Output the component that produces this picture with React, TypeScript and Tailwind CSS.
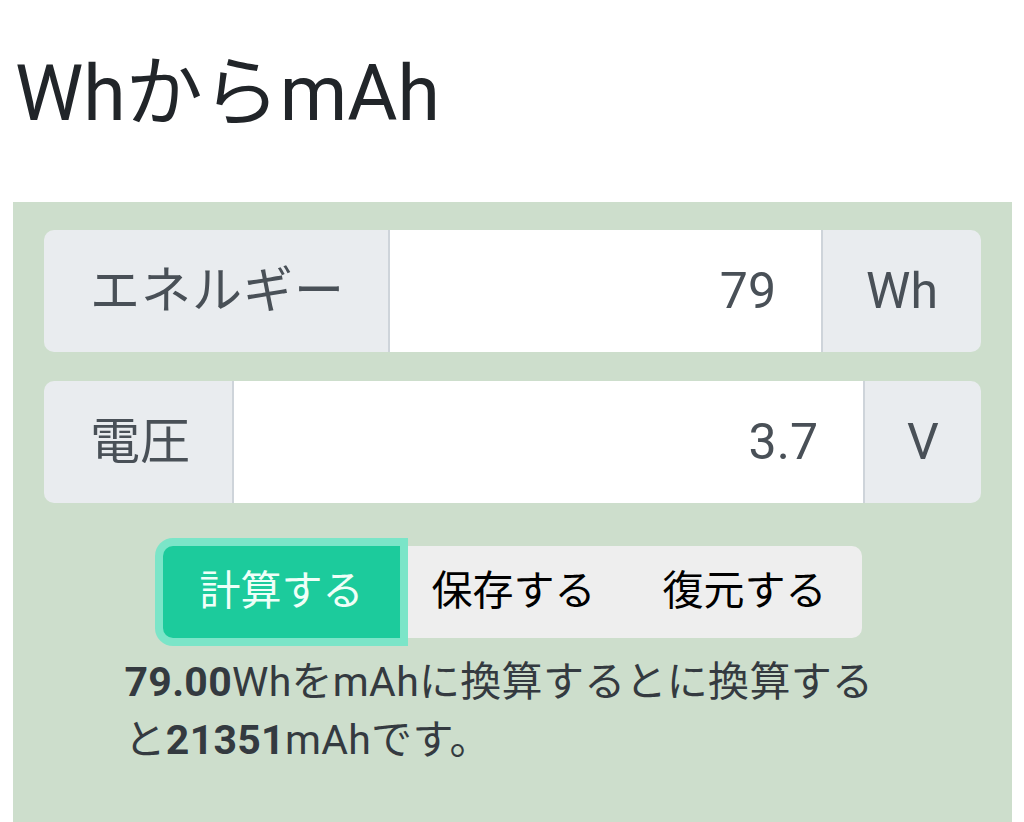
export default function App() {
  const font = { fontFamily: 'Roboto, "Noto Sans CJK JP", sans-serif' };
  return (
    <div className="min-h-screen bg-white" style={font}>
      <h1 className="pl-[15px] pt-[44px] h-[202px] text-[77px] leading-[100px] text-[#212529] font-normal">
        WhからmAh
      </h1>
      <div className="mx-[13px] w-[999px] bg-[#cddecc] px-[31px] pt-[28px] pb-[80px]">
        <div className="flex h-[122px] rounded-[10px] overflow-hidden text-[50px] text-[#495057]">
          <div className="w-[346px] flex items-center pl-[46px] bg-[#e9ecef] border-r-2 border-[#ced4da] tracking-[1px]">エネルギー</div>
          <div className="flex-1 flex items-center justify-end pr-[45px] bg-white">79</div>
          <div className="w-[160px] flex items-center justify-center bg-[#e9ecef] border-l-2 border-[#ced4da]">Wh</div>
        </div>
        <div className="flex h-[122px] mt-[29px] rounded-[10px] overflow-hidden text-[50px] text-[#495057]">
          <div className="w-[190px] flex items-center pl-[46px] bg-[#e9ecef] border-r-2 border-[#ced4da]">電圧</div>
          <div className="flex-1 flex items-center justify-end pr-[45px] bg-white">3.7</div>
          <div className="w-[118px] flex items-center justify-center bg-[#e9ecef] border-l-2 border-[#ced4da]">V</div>
        </div>
        <div className="flex justify-center mt-[43px]">
          <div className="flex h-[92px] rounded-[10px] bg-[#eeeeee] text-[41px]">
            <button className="relative z-10 w-[237px] h-full rounded-l-[10px] bg-[#1ccb9c] text-[#effff8] ring-8 ring-[#7be5c8]">
              計算する
            </button>
            <button className="w-[227px] h-full text-black">保存する</button>
            <button className="w-[235px] h-full text-black">復元する</button>
          </div>
        </div>
        <p className="mx-auto w-[776px] mt-[15px] text-[41px] leading-[58px] text-[#343a40] tracking-[0.3px]">
          <b>79.00</b>WhをmAhに換算するとに換算すると<b>21351</b>mAhです。
        </p>
      </div>
    </div>
  );
}
